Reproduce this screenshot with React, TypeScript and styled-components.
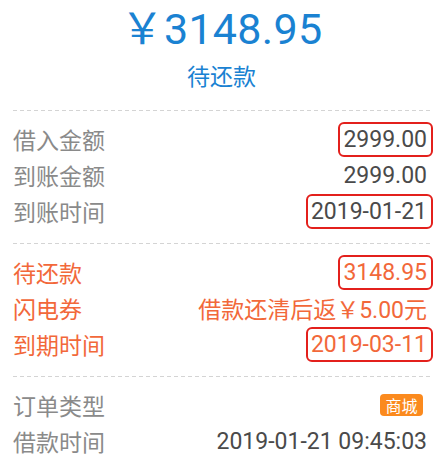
import { styled, createGlobalStyle } from 'styled-components';

// Page-wide reset and fonts
const GlobalStyle = createGlobalStyle`
    body {
        margin: 0;
        background: #ffffff;
        font-family: Roboto, "Noto Sans CJK SC", sans-serif;
    }
`;

const StyledPage = styled.div`
    width: 444px;
    padding: 0 14px 0 13px;
    box-sizing: border-box;
`;

// Top block with the big amount and the status
const StyledHeader = styled.header`
    display: flex;
    flex-direction: column;
    align-items: center;
    padding: 4px 0 17px;
    color: #1a82d2;
`;

const StyledAmount = styled.div`
    font-size: 43px;
    line-height: 50px;
    letter-spacing: 0.3px;
`;

const StyledStatus = styled.div`
    margin-top: 9px;
    font-size: 23px;
    line-height: 30px;
`;

const StyledDivider = styled.div`
    height: 1px;
    background-image: linear-gradient(to right, #d4d4d4 4px, transparent 4px);
    background-size: 7px 1px;
`;

const StyledSection = styled.section`
    padding: 10px 0 14px;
`;

// One label / value line; tone switches the colours
const StyledRow = styled.div<{ $tone?: 'gray' | 'orange' }>`
    display: flex;
    justify-content: space-between;
    align-items: center;
    height: 36px;
    padding-right: 3px;
    font-size: 23px;
    color: ${p => (p.$tone === 'orange' ? '#f2683a' : '#8a8a8a')};
`;

const StyledValue = styled.span<{ $tone?: 'gray' | 'orange' }>`
    color: ${p => (p.$tone === 'orange' ? '#f2683a' : '#4a4a4a')};
`;

// Red annotation frame drawn around some values
const StyledMarked = styled(StyledValue)`
    outline: 2px solid #e3201c;
    outline-offset: 2px;
    border-radius: 2px;
    padding: 0 2px 0 1px;
    margin-right: -2px;
`;

const StyledBadge = styled.span`
    display: inline-flex;
    align-items: center;
    justify-content: center;
    width: 43px;
    height: 22px;
    margin-right: 4px;
    border-radius: 4px;
    background: #fb8a1e;
    color: #ffffff;
    font-size: 16px;
`;

export default function App() {
    return (
        <>
            <GlobalStyle />
            <StyledPage>
                <StyledHeader>
                    <StyledAmount>￥3148.95</StyledAmount>
                    <StyledStatus>待还款</StyledStatus>
                </StyledHeader>

                <StyledDivider />
                {/* Loan amounts */}
                <StyledSection>
                    <StyledRow>
                        <span>借入金额</span>
                        <StyledMarked>2999.00</StyledMarked>
                    </StyledRow>
                    <StyledRow>
                        <span>到账金额</span>
                        <StyledValue>2999.00</StyledValue>
                    </StyledRow>
                    <StyledRow>
                        <span>到账时间</span>
                        <StyledMarked>2019-01-21</StyledMarked>
                    </StyledRow>
                </StyledSection>

                <StyledDivider />
                {/* Repayment */}
                <StyledSection>
                    <StyledRow $tone="orange">
                        <span>待还款</span>
                        <StyledMarked $tone="orange">3148.95</StyledMarked>
                    </StyledRow>
                    <StyledRow $tone="orange">
                        <span>闪电券</span>
                        <StyledValue $tone="orange">借款还清后返￥5.00元</StyledValue>
                    </StyledRow>
                    <StyledRow $tone="orange">
                        <span>到期时间</span>
                        <StyledMarked $tone="orange">2019-03-11</StyledMarked>
                    </StyledRow>
                </StyledSection>

                <StyledDivider />
                {/* Order info */}
                <StyledSection>
                    <StyledRow>
                        <span>订单类型</span>
                        <StyledBadge>商城</StyledBadge>
                    </StyledRow>
                    <StyledRow>
                        <span>借款时间</span>
                        <StyledValue>2019-01-21 09:45:03</StyledValue>
                    </StyledRow>
                </StyledSection>
            </StyledPage>
        </>
    );
}
